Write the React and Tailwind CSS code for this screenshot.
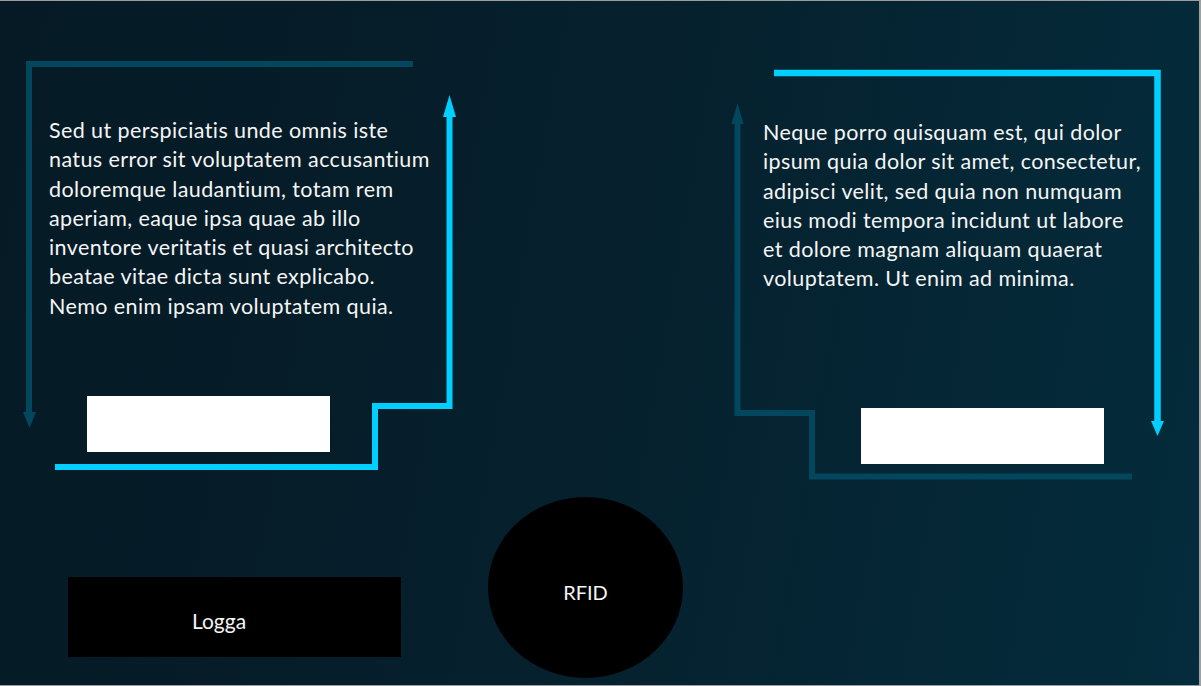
import React from "react";

const LEFT_LINES = [
  "Sed ut perspiciatis unde omnis iste",
  "natus error sit voluptatem accusantium",
  "doloremque laudantium, totam rem",
  "aperiam, eaque ipsa quae ab illo",
  "inventore veritatis et quasi architecto",
  "beatae vitae dicta sunt explicabo.",
  "Nemo enim ipsam voluptatem quia.",
];

const RIGHT_LINES = [
  "Neque porro quisquam est, qui dolor",
  "ipsum quia dolor sit amet, consectetur,",
  "adipisci velit, sed quia non numquam",
  "eius modi tempora incidunt ut labore",
  "et dolore magnam aliquam quaerat",
  "voluptatem. Ut enim ad minima.",
];

const DARK = "#03475f";
const BRIGHT = "#00cfff";

function Para({ lines }) {
  return (
    <div className="text-[21.5px] leading-[29.3px] tracking-[0.4px] text-[#f5f5f5] whitespace-nowrap">
      {lines.map((l, i) => (
        <div key={i}>{l}</div>
      ))}
    </div>
  );
}

export default function App() {
  return (
    <div
      className="relative w-[1201px] h-[686px] overflow-hidden bg-[linear-gradient(100deg,#051a25_0%,#06202d_50%,#042c3c_100%)] shadow-[inset_0_1px_0_#9c9c9c,inset_-2px_0_0_#a0a0a0,inset_0_-1px_0_#9c9c9c]"
      style={{ fontFamily: "Lato, 'Open Sans', sans-serif" }}
    >
      <div className="flex h-[486px]">
        {/* Left panel */}
        <div className="relative w-[600px] h-full">
          <svg className="absolute inset-0 pointer-events-none" width="600" height="486" viewBox="0 0 600 486">
            <path d="M413 64 H29 V414" fill="none" stroke={DARK} strokeWidth="6" strokeLinejoin="miter" />
            <polygon points="23,412 36,412 29.5,428" fill={DARK} />
            <path d="M55 467 H375 V406 H449.5 V114" fill="none" stroke={BRIGHT} strokeWidth="6" strokeLinejoin="miter" />
            <polygon points="443,117 456,117 449.5,95" fill={BRIGHT} />
          </svg>
          <div className="relative pt-[116px] pl-[49px]">
            <Para lines={LEFT_LINES} />
          </div>
          <div className="relative ml-[87px] mt-[75px] w-[243px] h-[56px] bg-white" />
        </div>

        {/* Right panel */}
        <div className="relative w-[601px] h-full">
          <svg className="absolute inset-0 pointer-events-none" width="601" height="486" viewBox="600 0 601 486">
            <path d="M774 73 H1157.5 V423" fill="none" stroke={BRIGHT} strokeWidth="6.5" strokeLinejoin="miter" />
            <polygon points="1151,421 1164,421 1157.5,436" fill={BRIGHT} />
            <path d="M737.5 121 V413 H812 V476.5 H1132" fill="none" stroke={DARK} strokeWidth="6" strokeLinejoin="miter" />
            <polygon points="731.5,124 743.5,124 737.5,103" fill={DARK} />
          </svg>
          <div className="relative pt-[118px] pl-[163px]">
            <Para lines={RIGHT_LINES} />
          </div>
          <div className="relative ml-[261px] mt-[114px] w-[243px] h-[56px] bg-white" />
        </div>
      </div>

      {/* Bottom row */}
      <div className="flex items-start">
        <div className="ml-[68px] mt-[91px] w-[333px] h-[80px] bg-black pt-[29px] pl-[124px] text-[21px] leading-[29px] text-[#f5f5f5]">
          Logga
        </div>
        <div className="ml-[87px] mt-[11px] w-[195px] h-[181px] rounded-[50%] bg-black pt-[83px] text-center text-[20px] leading-[24px] text-[#f5f5f5]">
          RFID
        </div>
      </div>
    </div>
  );
}
